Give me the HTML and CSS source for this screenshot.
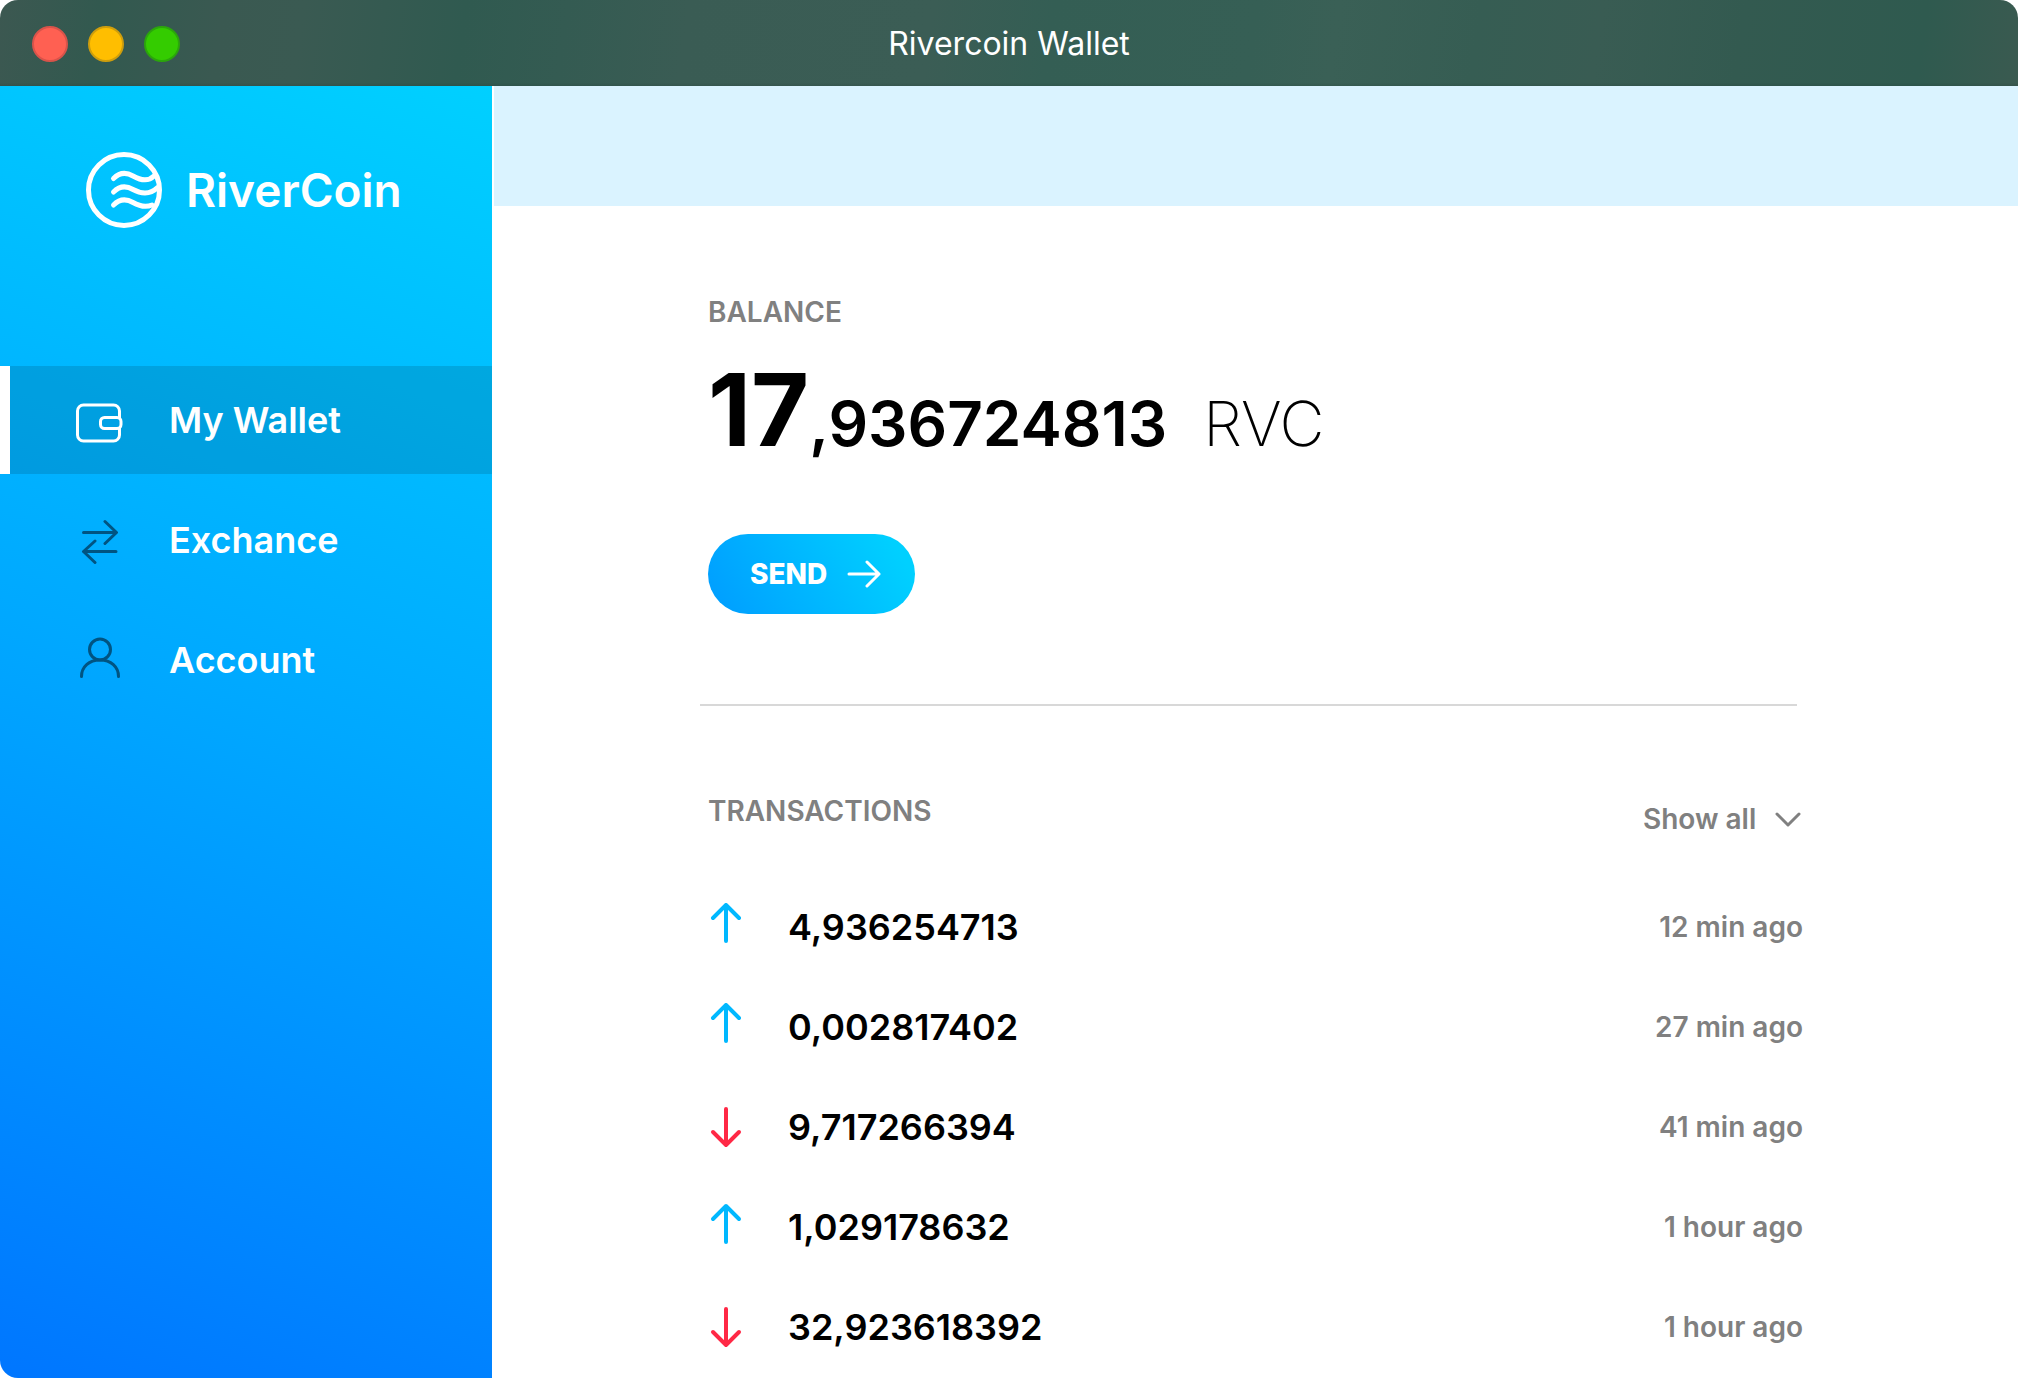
FILE: index.html
```html
<!DOCTYPE html>
<html lang="en">
<head>
  <meta charset="utf-8">
  <meta name="viewport" content="width=device-width, initial-scale=1">
  <title>Rivercoin Wallet</title>
  <link rel="stylesheet" href="styles.css">
</head>
<body>
  <div class="window">
    <header class="titlebar">
      <div class="lights">
        <button class="light light-close" type="button" aria-label="Close"></button>
        <button class="light light-minimize" type="button" aria-label="Minimize"></button>
        <button class="light light-zoom" type="button" aria-label="Zoom"></button>
      </div>
      <h1 class="title">Rivercoin Wallet</h1>
    </header>

    <aside class="sidebar">
      <div class="brand">
        <svg class="brand-mark" viewBox="0 0 76 76" fill="none" stroke="#fff" stroke-width="5" stroke-linecap="round" aria-hidden="true">
          <circle cx="38" cy="38" r="35.5"/>
          <path d="M27.500 26.500C33 21 40 20 47 24S62 30 68 24"/>
          <path d="M27.500 40C33 34.500 40 33.500 47 37.500S64 43 71 36"/>
          <path d="M27.500 53C33 47.500 40 46.500 47 50.500S60 55.500 66 53"/>
        </svg>
        <span class="brand-name">RiverCoin</span>
      </div>
      <nav class="nav">
        <a class="nav-item nav-item-active" href="#wallet" aria-current="page">
          <svg class="nav-icon" viewBox="0 0 48 48" aria-hidden="true">
            <rect x="2.500" y="9" width="42" height="36" rx="6"/>
            <rect class="wallet-clasp" x="25.500" y="21.500" width="20.500" height="11" rx="4"/>
          </svg>
          <span>My Wallet</span>
        </a>
        <a class="nav-item" href="#exchange">
          <svg class="nav-icon" viewBox="0 0 48 48" aria-hidden="true">
            <path d="M8.500 16.500H41M30 5.500L41.500 16.500L30 27.500M41 35.500H8.500M20 25L8.500 35.500L20 46.500"/>
          </svg>
          <span>Exchance</span>
        </a>
        <a class="nav-item" href="#account">
          <svg class="nav-icon" viewBox="0 0 48 48" aria-hidden="true">
            <circle cx="25" cy="13.500" r="10.500"/>
            <path d="M6.500 40.500C6.500 31 14 24 25 24S43.500 31 43.500 40.500"/>
          </svg>
          <span>Account</span>
        </a>
      </nav>
    </aside>

    <main class="main">
      <div class="band"></div>
      <div class="content">
        <section class="balance">
          <h2 class="label">BALANCE</h2>
          <p class="amount"><strong class="amount-whole">17</strong><span class="amount-fraction">,936724813</span><span class="amount-unit">RVC</span></p>
          <button class="send" type="button">
            <span>SEND</span>
            <svg class="send-icon" viewBox="0 0 34 28" aria-hidden="true"><path d="M2 14H32M20 2L32 14L20 26"/></svg>
          </button>
        </section>
        <hr class="divider">
        <section class="transactions">
          <div class="transactions-head">
            <h2 class="label">TRANSACTIONS</h2>
            <div class="filter">
              <select class="filter-select" aria-label="Filter transactions">
                <option>Show all</option>
              </select>
              <svg class="filter-icon" viewBox="0 0 26 18" aria-hidden="true"><path d="M2 3L13 14L24 3"/></svg>
            </div>
          </div>
          <table class="rows">
            <tbody>
              <tr>
                <td class="direction"><svg class="arrow arrow-up" viewBox="0 0 36 48" role="img" aria-label="Sent"><path d="M18 38V2M5 15L18 2L31 15"/></svg></td>
                <td class="value">4,936254713</td>
                <td class="time">12 min ago</td>
              </tr>
              <tr>
                <td class="direction"><svg class="arrow arrow-up" viewBox="0 0 36 48" role="img" aria-label="Sent"><path d="M18 38V2M5 15L18 2L31 15"/></svg></td>
                <td class="value">0,002817402</td>
                <td class="time">27 min ago</td>
              </tr>
              <tr>
                <td class="direction"><svg class="arrow arrow-down" viewBox="0 0 36 48" role="img" aria-label="Received"><path d="M18 6V42M5 29L18 42L31 29"/></svg></td>
                <td class="value">9,717266394</td>
                <td class="time">41 min ago</td>
              </tr>
              <tr>
                <td class="direction"><svg class="arrow arrow-up" viewBox="0 0 36 48" role="img" aria-label="Sent"><path d="M18 39V3M5 16L18 3L31 16"/></svg></td>
                <td class="value">1,029178632</td>
                <td class="time">1 hour ago</td>
              </tr>
              <tr>
                <td class="direction"><svg class="arrow arrow-down" viewBox="0 0 36 48" role="img" aria-label="Received"><path d="M18 6V42M5 29L18 42L31 29"/></svg></td>
                <td class="value">32,923618392</td>
                <td class="time">1 hour ago</td>
              </tr>
            </tbody>
          </table>
        </section>
      </div>
    </main>
  </div>
</body>
</html>
```

FILE: styles.css
```css
* {
  box-sizing: border-box;
}

body {
  margin: 0;
  background: #fff;
  color: #000;
  font-family: Inter, Roboto, "Liberation Sans", sans-serif;
}

h1, h2, p {
  margin: 0;
}

button, select {
  border: 0;
  padding: 0;
  font-family: inherit;
}

.window {
  display: grid;
  grid-template-columns: 492px 1fr;
  grid-template-rows: 86px 1fr;
  column-gap: 2px;
  min-height: 100vh;
  overflow: hidden;
  border-radius: 18px 18px 0 18px;
}

/* Title bar */
.titlebar {
  grid-column: 1 / -1;
  display: grid;
  grid-template-columns: 1fr auto 1fr;
  align-items: center;
  padding: 2px 32px 0;
  background:
    linear-gradient(rgba(0, 0, 0, 0) 96%, rgba(0, 0, 0, 0.08)),
    linear-gradient(98deg, #3c5851 0%, #32594f 5%, #3a5951 11%, #3a5a52 15%, #305a50 23%, #345b52 28%, #3a5c54 34%, #3b5d55 46%, #345e54 52%, #365f55 62%, #3a6056 66%, #365d53 73%, #395c53 79%, #335a50 86%, #2f5a4f 95%, #3a5a50 100%);
}

.lights {
  display: flex;
  gap: 20px;
}

.light {
  width: 36px;
  height: 36px;
  border: 2px solid;
  border-radius: 50%;
}

.light-close {
  background: #ff6052;
  border-color: #d9534a;
}

.light-minimize {
  background: #ffbe00;
  border-color: #cf9e0c;
}

.light-zoom {
  background: #34cc00;
  border-color: #2ba60b;
}

.title {
  color: #fff;
  font-size: 32px;
  font-weight: 400;
  line-height: 36px;
}

/* Sidebar */
.sidebar {
  background: linear-gradient(200deg, #00d0ff 0%, #00a8ff 48%, #0076ff 100%);
}

.brand {
  display: flex;
  align-items: center;
  gap: 24px;
  height: 280px;
  padding: 0 0 72px 86px;
}

.brand-mark {
  width: 76px;
  height: 76px;
}

.brand-name {
  color: #fff;
  font-size: 46px;
  font-weight: 600;
}

.nav {
  display: flex;
  flex-direction: column;
  gap: 12px;
}

.nav-item {
  display: flex;
  align-items: center;
  gap: 46px;
  height: 108px;
  padding-left: 65px;
  border-left: 10px solid transparent;
  color: #fff;
  font-size: 36px;
  font-weight: 600;
  line-height: 40px;
  text-decoration: none;
}

.nav-item-active {
  border-left-color: #fff;
  background: rgba(0, 0, 0, 0.12);
  background-clip: padding-box;
}

.nav-icon {
  width: 48px;
  height: 48px;
  fill: none;
  stroke: #005482;
  stroke-width: 3;
  stroke-linecap: round;
  stroke-linejoin: round;
}

.nav-item-active .nav-icon {
  stroke: #fff;
}

.wallet-clasp {
  fill: #00a2e6;
}

/* Main column */
.band {
  height: 120px;
  background: #daf3ff;
}

.content {
  padding: 88px 215px 0 206px;
}

.label {
  color: #808080;
  font-size: 28px;
  font-weight: 600;
  line-height: 36px;
}

.balance {
  padding-left: 8px;
}

.amount {
  display: flex;
  align-items: baseline;
  height: 96px;
  margin-top: 32px;
  font-size: 62px;
  font-weight: 600;
  line-height: 96px;
}

.amount-whole {
  font-size: 100px;
  font-weight: 700;
}

.amount-unit {
  margin-left: 36px;
  font-weight: 200;
}

.send {
  display: flex;
  align-items: center;
  gap: 20px;
  height: 80px;
  margin-top: 76px;
  padding: 0 34px 0 42px;
  border-radius: 40px;
  background: linear-gradient(60deg, #009cff, #00d0ff 90%);
  color: #fff;
  font-size: 28px;
  font-weight: 800;
}

.send-icon {
  width: 34px;
  height: 28px;
  fill: none;
  stroke: #fff;
  stroke-width: 3;
  stroke-linecap: round;
  stroke-linejoin: round;
}

.divider {
  height: 2px;
  margin: 90px 6px 0 0;
  border: 0;
  background: #d8d8d8;
}

.transactions {
  margin-top: 87px;
  padding-left: 8px;
}

.transactions-head {
  display: flex;
  justify-content: space-between;
}

.filter {
  position: relative;
  padding-top: 8px;
}

.filter-select {
  appearance: none;
  padding-right: 46px;
  background: none;
  color: #808080;
  font-size: 28px;
  font-weight: 600;
  line-height: 36px;
}

.filter-icon {
  position: absolute;
  top: 18px;
  right: 2px;
  width: 26px;
  height: 18px;
  fill: none;
  stroke: #808080;
  stroke-width: 3;
  stroke-linecap: round;
  stroke-linejoin: round;
  pointer-events: none;
}

.rows {
  width: 100%;
  margin-top: 40px;
  border-collapse: collapse;
}

.rows td {
  height: 100px;
  padding: 0;
  vertical-align: middle;
}

.direction {
  width: 80px;
}

.arrow {
  display: block;
  width: 36px;
  height: 48px;
  fill: none;
  stroke-width: 4;
  stroke-linecap: round;
  stroke-linejoin: round;
}

.arrow-up {
  stroke: #00b8ff;
}

.arrow-down {
  stroke: #ff2845;
}

.value {
  font-size: 36px;
  font-weight: 600;
}

.time {
  color: #808080;
  font-size: 28px;
  font-weight: 600;
  text-align: right;
}
```
